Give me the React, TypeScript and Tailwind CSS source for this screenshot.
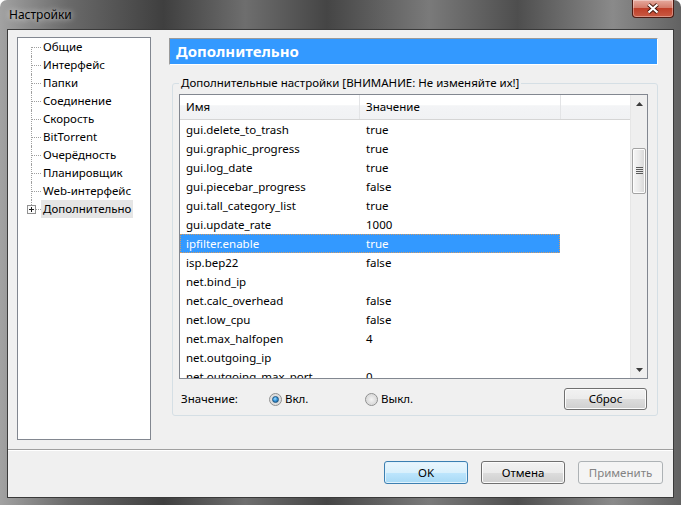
const TREE = [
  "Общие",
  "Интерфейс",
  "Папки",
  "Соединение",
  "Скорость",
  "BitTorrent",
  "Очерёдность",
  "Планировщик",
  "Web-интерфейс",
  "Дополнительно",
];

const ROWS: [string, string][] = [
  ["gui.delete_to_trash", "true"],
  ["gui.graphic_progress", "true"],
  ["gui.log_date", "true"],
  ["gui.piecebar_progress", "false"],
  ["gui.tall_category_list", "true"],
  ["gui.update_rate", "1000"],
  ["ipfilter.enable", "true"],
  ["isp.bep22", "false"],
  ["net.bind_ip", ""],
  ["net.calc_overhead", "false"],
  ["net.low_cpu", "false"],
  ["net.max_halfopen", "4"],
  ["net.outgoing_ip", ""],
  ["net.outgoing_max_port", "0"],
];

const SELECTED = 6;

function TreeRow({ label, i }: { label: string; i: number }) {
  const last = i === TREE.length - 1;
  return (
    <div className="flex h-[18px] items-stretch">
      <div className="w-[13px]" />
      <div className="relative w-[10px]">
        {/* tree lines */}
        <span
          className={`absolute left-0 w-0 border-l border-dotted border-[#a0a0a0] ${
            i === 0 ? "top-[9px] bottom-0" : last ? "top-0 h-[9px]" : "top-0 bottom-0"
          }`}
        />
        <span className="absolute left-[1px] right-0 top-[9px] border-t border-dotted border-[#a0a0a0]" />
        {last && (
          <svg className="absolute left-[-4px] top-[5px]" width="9" height="9" viewBox="0 0 9 9">
            <rect x="0.5" y="0.5" width="8" height="8" fill="#fbfbfb" stroke="#919191" />
            <path d="M2 4.5h5M4.5 2v5" stroke="#1e1e1e" strokeWidth="1" />
          </svg>
        )}
      </div>
      <div className={`flex items-center px-[2px] ${last ? "bg-[#e5e5e5]" : ""}`}>{label}</div>
    </div>
  );
}

function Radio({ checked }: { checked?: boolean }) {
  return (
    <span className="flex h-[13px] w-[13px] items-center justify-center rounded-full border border-[#8e8f8f] bg-[radial-gradient(circle_at_50%_50%,#f4f4f4_0%,#dcdcdc_60%,#f0f0f0_100%)]">
      {checked && (
        <span className="h-[7px] w-[7px] rounded-full border border-[#1d5480] bg-[radial-gradient(circle_at_40%_35%,#9fdcff_0%,#3a9ae0_45%,#14527f_100%)]" />
      )}
    </span>
  );
}

function Arrow({ up }: { up?: boolean }) {
  return (
    <div className="flex h-[17px] items-center justify-center">
      <svg width="7" height="4" viewBox="0 0 7 4">
        <path d={up ? "M0 4h7L3.5 0z" : "M0 0h7L3.5 4z"} fill="#3c3c3c" />
      </svg>
    </div>
  );
}

export default function App() {
  return (
    <div className="relative flex h-[505px] w-[681px] flex-col overflow-hidden rounded-t-[7px] bg-[linear-gradient(to_right,#a2a2a2_0%,#6a6a6a_10%,#3f3f3f_24%,#6e6e6e_36%,#454545_48%,#7a7a7a_63%,#4e4e4e_76%,#8a8a8a_90%,#626262_100%)] font-['Segoe_UI','Noto_Sans',sans-serif] text-[11.5px] text-black">
      {/* Title bar */}
      <div className="flex h-[29px] items-start justify-between pl-[9px]">
        <span className="pt-[7px] text-[12px] leading-[16px] [text-shadow:0_0_6px_rgba(255,255,255,0.95)]">Настройки</span>
        <div className="mr-[7px] flex h-[18px] w-[42px] items-center justify-center rounded-b-[4px] border border-t-0 border-[#4b1a12] bg-[linear-gradient(to_bottom,#e6aa9e_0%,#d47d6c_45%,#bf3f29_50%,#c95a43_100%)] shadow-[inset_0_0_0_1px_rgba(255,255,255,0.35)]">
          <svg width="14" height="11" viewBox="0 0 14 11">
            <path d="M2.5 1.5L11.5 9.5M11.5 1.5L2.5 9.5" stroke="#45190f" strokeWidth="4" />
            <path d="M2.5 1.5L11.5 9.5M11.5 1.5L2.5 9.5" stroke="#ffffff" strokeWidth="2.2" />
          </svg>
        </div>
      </div>

      {/* Client area */}
      <div className="mx-[7px] mb-[7px] flex flex-1 flex-col border border-[#3a3a3a] bg-[#f0f0f0]">
        <div className="flex pl-[9px] pt-[7px]">
          {/* Tree */}
          <div className="h-[403px] w-[134px] border border-[#828790] bg-white">
            {TREE.map((t, i) => (
              <TreeRow key={t} label={t} i={i} />
            ))}
          </div>

          {/* Right page */}
          <div className="ml-[18px] w-[489px] pt-[1px]">
            <div className="flex h-[27px] items-center border border-b-white border-l-[#9a9a9a] border-r-white border-t-[#9a9a9a] bg-[#3399ff] pl-[6px] text-[15px] font-bold text-white">
              Дополнительно
            </div>

            <fieldset className="ml-[3px] mt-[10px] rounded-[3px] border border-[#d5dfe5] pb-[5px] pl-[6px] pr-[9px] pt-[3px]">
              <legend className="px-[2px] leading-[16px]">
                Дополнительные настройки [ВНИМАНИЕ: Не изменяйте их!]
              </legend>

              {/* List view */}
              <div className="flex h-[285px] border border-[#828790] bg-white">
                <div className="flex flex-1 flex-col overflow-hidden">
                  <div className="flex h-[25px] shrink-0 border-b border-[#d5d5d5] bg-[linear-gradient(to_bottom,#ffffff_0%,#ffffff_40%,#f3f4f6_45%,#f1f2f4_100%)]">
                    <div className="flex w-[180px] items-center border-r border-[#e3e4e6] pl-[6px]">Имя</div>
                    <div className="flex w-[201px] items-center border-r border-[#e3e4e6] pl-[6px]">Значение</div>
                    <div className="flex-1" />
                  </div>
                  {ROWS.map(([k, v], i) => (
                    <div
                      key={k}
                      className={`flex h-[19px] w-[380px] shrink-0 items-center ${
                        i === SELECTED
                          ? "border border-dotted border-[#d39a62] bg-[#3399ff] text-white"
                          : ""
                      }`}
                    >
                      <div className={i === SELECTED ? "w-[179px] pl-[5px]" : "w-[180px] pl-[6px]"}>{k}</div>
                      <div className="pl-[6px]">{v}</div>
                    </div>
                  ))}
                </div>

                {/* Scrollbar */}
                <div className="flex w-[17px] flex-col border-l border-[#e6e6e6] bg-[#efefef]">
                  <Arrow up />
                  <div className="flex-1 pt-[36px]">
                    <div className="mx-[1px] flex h-[46px] items-center justify-center rounded-[2px] border border-[#a3a3a3] bg-[linear-gradient(to_right,#f6f6f6_0%,#eaeaea_50%,#d6d6d6_100%)] shadow-[inset_0_0_0_1px_#fdfdfd]">
                      <svg width="7" height="8" viewBox="0 0 7 8">
                        <path d="M0 0.5h7M0 2.5h7M0 4.5h7M0 6.5h7" stroke="#5a5a5a" strokeWidth="1" />
                      </svg>
                    </div>
                  </div>
                  <Arrow />
                </div>
              </div>

              {/* Value row */}
              <div className="mt-[9px] flex h-[22px] items-center">
                <span className="w-[90px] pl-[2px]">Значение:</span>
                <label className="flex w-[96px] items-center gap-[3px]">
                  <Radio checked />
                  <span>Вкл.</span>
                </label>
                <label className="flex items-center gap-[3px]">
                  <Radio />
                  <span>Выкл.</span>
                </label>
                <button className="ml-auto mr-[1px] h-[22px] w-[83px] rounded-[3px] border border-[#707070] bg-[linear-gradient(to_bottom,#f2f2f2_0%,#ebebeb_50%,#dddddd_50%,#cfcfcf_100%)] shadow-[inset_0_0_0_1px_#fcfcfc]">
                  Сброс
                </button>
              </div>
            </fieldset>
          </div>
        </div>

        {/* Separator */}
        <div className="mt-[9px] h-[2px] border-b border-t border-b-white border-t-[#a0a0a0]" />

        {/* Dialog buttons */}
        <div className="flex justify-end gap-[13px] pr-[10px] pt-[10px]">
          <button className="h-[23px] w-[84px] rounded-[3px] border border-[#3c7fb1] bg-[linear-gradient(to_bottom,#eaf6fd_0%,#d9f0fc_50%,#bee6fd_50%,#a7d9f5_100%)] shadow-[inset_0_0_0_1px_#dff2fd]">
            OK
          </button>
          <button className="h-[23px] w-[84px] rounded-[3px] border border-[#707070] bg-[linear-gradient(to_bottom,#f2f2f2_0%,#ebebeb_50%,#dddddd_50%,#cfcfcf_100%)] shadow-[inset_0_0_0_1px_#fcfcfc]">
            Отмена
          </button>
          <button className="h-[23px] w-[85px] rounded-[3px] border border-[#adb2b5] bg-[#f4f4f4] text-[#838383]">
            Применить
          </button>
        </div>
      </div>
    </div>
  );
}
